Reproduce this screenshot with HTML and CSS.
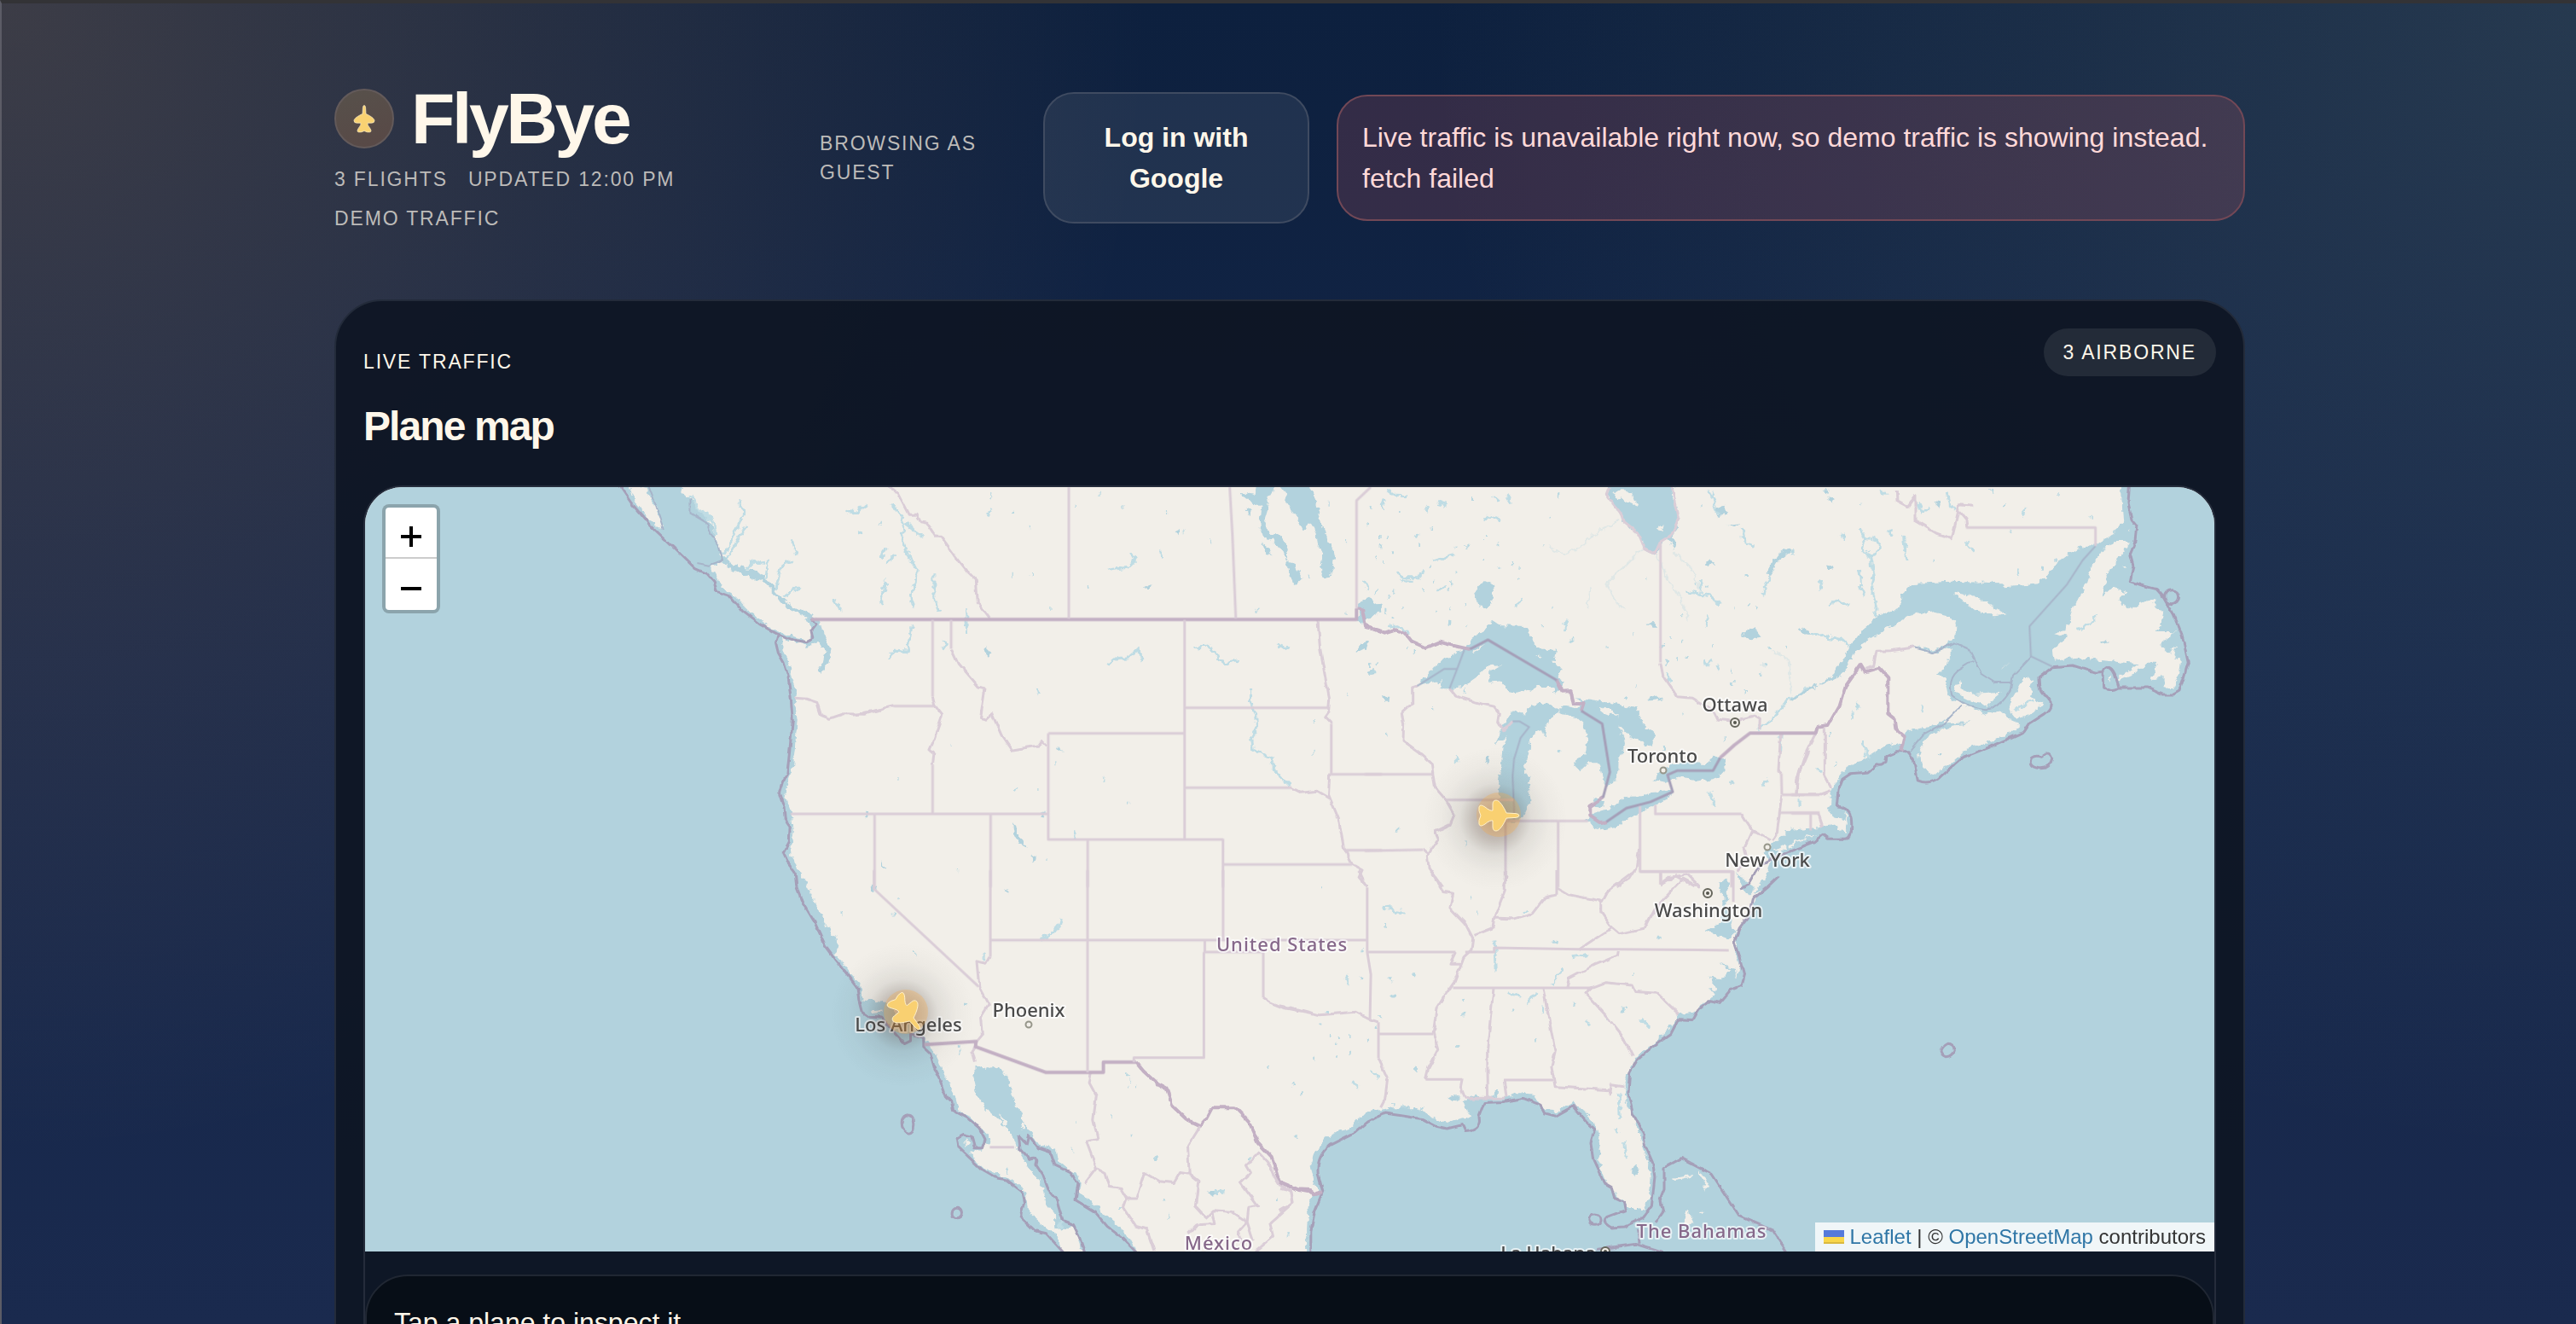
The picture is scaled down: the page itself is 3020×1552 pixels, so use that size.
FILE: index.html
```html
<!DOCTYPE html>
<html lang="en">
<head>
<meta charset="utf-8">
<title>FlyBye</title>
<link rel="stylesheet" href="styles.css">
</head>
<body>
<div class="app">
  <header class="topbar">
    <div class="brand">
      <div class="brand-title">
        <span class="logo">
          <svg viewBox="-24 -26 48 52" aria-hidden="true"><path class="plane" d="M0-24q2 0 2.400 4L3-9C10-6 18-1 18 3q0 4-5 4L6 7q-1 3 4 9 4 6 0 7-4 1-10-2-6 3-10 2-4-1 0-7 5-6 4-9L-13 7q-5 0-5-4C-18-1-10-6-3-9L-2.400-20Q-2-24 0-24z"/></svg>
        </span>
        <h1>FlyBye</h1>
      </div>
      <div class="meta">
        <span>3 FLIGHTS</span>
        <span>UPDATED 12:00 PM</span>
        <span>DEMO TRAFFIC</span>
      </div>
    </div>
    <p class="guest">BROWSING AS GUEST</p>
    <button class="login" type="button">Log in with Google</button>
    <p class="alert" role="alert">Live traffic is unavailable right now, so demo traffic is showing instead. fetch failed</p>
  </header>

  <main class="panel">
    <div class="panel-head">
      <div>
        <p class="eyebrow">LIVE TRAFFIC</p>
        <h2>Plane map</h2>
      </div>
      <span class="chip">3 AIRBORNE</span>
    </div>

    <div class="map-card">
      <div class="map">
        <svg class="map-art" viewBox="428 571 2168 896" preserveAspectRatio="xMidYMid slice" role="img" aria-label="Map of North America">
          <defs>
            <filter id="rough" x="-5%" y="-5%" width="110%" height="110%">
              <feTurbulence type="fractalNoise" baseFrequency="0.12" numOctaves="3" seed="4" result="n"/>
              <feDisplacementMap in="SourceGraphic" in2="n" scale="9" xChannelSelector="R" yChannelSelector="G"/>
            </filter>
            <filter id="wiggle" x="-5%" y="-5%" width="110%" height="110%">
              <feTurbulence type="fractalNoise" baseFrequency="0.08" numOctaves="2" seed="9" result="n"/>
              <feDisplacementMap in="SourceGraphic" in2="n" scale="5" xChannelSelector="R" yChannelSelector="G"/>
            </filter>
            <radialGradient id="halo">
              <stop offset="0" stop-color="#4a2c1c" stop-opacity=".42"/>
              <stop offset=".3" stop-color="#4a3830" stop-opacity=".27"/>
              <stop offset=".5" stop-color="#40403e" stop-opacity=".1"/>
              <stop offset=".75" stop-color="#404444" stop-opacity=".03"/>
              <stop offset="1" stop-color="#404444" stop-opacity="0"/>
            </radialGradient>
            <path id="plane" d="M0-24q2 0 2.400 4L3-9C10-6 18-1 18 3q0 4-5 4L6 7q-1 3 4 9 4 6 0 7-4 1-10-2-6 3-10 2-4-1 0-7 5-6 4-9L-13 7q-5 0-5-4C-18-1-10-6-3-9L-2.400-20Q-2-24 0-24z"/>
          </defs>

          <rect class="land" x="428" y="571" width="2168" height="896"/>

          <!-- coastlines and lakes -->
          <g filter="url(#rough)">
            <!-- north-west -->
            <g transform="translate(420 560) scale(.3954 .3333)">
              <path class="water" d="M-20 0H940L960 50 985 75 1005 105 1035 130 1050 175 1065 230 1080 270 1100 300 1150 322 1185 330 1225 370 1240 400 1270 440 1310 462 1345 480 1365 500 1380 540 1400 600 1395 650 1370 690 1362 670 1378 650 1385 610 1370 585 1330 590 1290 578 1258 560 1258 610 1275 650 1288 710 1298 740 1295 790 1302 850 1296 930 1290 1010 1275 1060 1268 1110 1275 1150 1288 1190 1292 1250 1282 1290 1280 1330 1300 1365 1312 1410 1315 1445H-20Z"/>
              <path class="land" d="M800 20L856 36 865 75 885 110 905 165 900 188 880 165 850 130 825 90ZM1045 310L1080 295 1110 325 1150 345 1200 365 1235 405 1262 450 1300 475 1330 495 1345 530 1345 572 1300 565 1240 540 1200 510 1150 460 1110 410 1075 385 1065 350Z"/>
              <path class="creek" d="M1085 270L1110 210 1130 160 1145 120 1130 85M1060 200L1050 150 1010 110 985 60M1090 290L1120 230 1150 170M1150 320L1175 290 1205 300M1210 350L1215 290M1240 390L1250 320 1285 290M1260 420L1310 380M1445 115L1480 120 1510 95M1480 120L1495 100M1285 220L1298 270M1410 425L1430 465M1550 390L1565 360M1480 195L1495 190"/>
            </g>
            <!-- northern plains -->
            <g transform="translate(1000 560) scale(.3954 .3333)">
              <path class="water" d="M1258 20H1355L1375 95 1390 165 1410 230 1428 262 1422 325 1408 352 1390 345 1388 300 1395 260 1375 235 1372 180 1350 160 1335 188 1320 150 1295 110 1280 80 1285 60ZM1195 20H1250L1245 50 1225 60 1232 110 1222 150 1235 205 1270 205 1290 240 1285 290 1310 305 1332 355 1312 375 1295 360 1290 310 1272 260 1245 215 1218 210 1205 160 1210 105 1180 80 1155 65V50L1190 60ZM1165 105L1180 110 1178 138 1168 130ZM1215 235L1230 245 1240 272 1225 270ZM470 1215L490 1245 513 1298 495 1292 475 1250ZM530 1328L540 1340 532 1358ZM1488 610L1500 590 1528 580 1520 600 1500 612ZM1525 680L1545 672 1540 695ZM955 190L968 182 965 202ZM862 378L880 380 875 392ZM395 595L408 610 402 630 392 615ZM612 945L625 965 608 955ZM1500 440L1530 425 1565 450 1560 470 1530 495 1515 515 1490 500 1505 475ZM85 1345L97 1370 85 1365ZM36 1175H44V1195H36ZM560 1172H568V1192H560Z"/>
              <path class="creek" d="M760 655L780 635 820 632 845 605 855 645M1010 600L1050 588 1075 610 1085 640 1110 652 1150 642M1180 740V790L1195 830 1198 880 1180 920 1185 955 1240 985 1250 1030 1300 1085M1260 592L1290 600M115 90L155 160 205 205M150 165L145 215 170 290 188 320 185 370 172 420 180 460M240 340L240 430 255 470M98 360L95 400 82 425 88 445M400 130L408 112M820 260L840 285 815 315 755 325M912 250L915 290M105 635L120 610 160 612 175 520M265 575L275 590 265 605M335 460L338 555M545 740L550 765M80 280L98 245M95 300L125 270M475 1105L488 1090M660 1240V1275"/>
              <path class="dot" d="M405 62h3M657 93h3M473 122h5M523 172h3M800 100h3M730 56h3M928 120h3M1060 226h3M528 347h3M472 341h3M690 384h4M585 462h3M1195 473h5M1365 858h3M1362 968h3M1465 762h3M744 1058h3M817 1142h3M600 1003h3M290 938h3M135 1058h3M547 1098h3M575 1347h3M311 1383h3M80 158h3M1348 350h5M1463 473h3M1410 92h3M1464 222h3M980 187h5"/>
            </g>
            <!-- great lakes -->
            <g transform="translate(1600 560) scale(.3333)">
              <path class="water" d="M860 10H1080L1090 90 1105 130 1100 170 1080 200 1090 230 1085 258 1070 215 1050 215 1020 268 985 250 965 200 910 155 900 125 850 60ZM185 732L270 640 350 605 375 570 430 530 450 500 480 520 570 522 590 580 615 605 675 605 668 645 692 675 680 710 705 720 690 752 660 750 665 735 610 735 540 758 505 750 480 715 430 720 440 680 478 658 440 660 395 700 345 735 300 742 262 742 270 715 220 725ZM458 940L475 890 520 820 555 830 585 800 640 793 685 815 655 850 640 870 632 920 620 885 600 895 580 940 575 980 562 1010 580 1080 580 1140 560 1185 540 1212 505 1210 480 1150 468 1080 480 1010 485 945 500 910 475 925ZM685 800L740 810 765 790 740 775 800 780 880 795 955 810 975 860 1020 905 1005 945 960 925 920 900 890 870 905 900 918 940 890 990 888 1060 850 1088 832 1050 825 1000 790 1000 755 1033 738 1015 745 990 775 975 785 920 770 870 740 840 685 825ZM775 1205L795 1185 840 1170 880 1155 920 1122 975 1120 1000 1108 1085 1100 1065 1130 1010 1160 950 1185 890 1225 840 1237 810 1230ZM812 1125L840 1135 835 1155 805 1160ZM1018 1063L1040 1030 1080 1005 1150 1003 1200 1005 1225 980 1265 985 1268 1035 1225 1060 1190 1065 1110 1055 1060 1070ZM390 400L420 362 450 375 455 420 430 458 400 450ZM1405 1320L1470 1260 1600 1235V1460H1370L1410 1400 1425 1350ZM1415 340L1430 290 1490 245 1500 262 1450 300 1425 345ZM1530 530L1555 525 1565 550 1545 558ZM1240 100L1265 95 1275 125 1245 140ZM1275 165L1320 160 1300 175ZM0 430L30 430 50 460 20 495 0 500ZM995 512L1015 510 1035 530 1010 530ZM1000 775L1030 765 1045 778 1010 784ZM1325 550L1370 525 1400 560 1350 565ZM1200 300L1215 285 1230 305 1210 312ZM60 770L85 770 82 788 65 788ZM425 980L440 975 437 1008 426 1000Z"/>
              <path class="land" d="M868 55Q900 30 940 55L958 98 915 82ZM1030 180L1055 165 1050 185ZM1440 1312L1490 1282 1600 1250V1265L1480 1310ZM815 800L870 820 890 842 850 828ZM600 628L620 625 615 632ZM380 610L425 585 420 592 385 618Z"/>
              <path class="creek" d="M80 45L100 60 150 62M255 85L290 95M420 155L435 130 480 150M240 290L310 270M110 330L140 350 190 350 205 330M130 360L170 365M0 360L10 400M70 80L60 100M500 60L515 85M450 65L470 80M215 120L225 100M180 215L190 195M1215 40L1230 90 1245 130M1330 180L1335 230 1370 240M1425 345L1400 415M1180 360V410M1130 400L1190 410 1220 420 1250 445M1380 885L1430 850 1480 790 1560 740M1465 905L1460 960M85 520L120 530 150 545M1060 690L1080 720M1190 640L1200 660 1220 640M1235 660L1245 680M1210 490L1205 530M700 540L708 500M530 460L550 425M255 400L280 375M325 975L325 1000M1215 1105L1230 1150M1400 1080L1420 1062"/>
              <path class="thin" d="M900 150L800 200 760 245 700 270 650 240M975 250L920 305 850 370 880 430 910 470M1030 270L1060 350 1110 420 1140 500M1090 265L1150 320 1180 400M790 380L785 460M1500 760L1490 640 1430 610"/>
              <path class="dot" d="M20 105h6M60 105h4M10 160h5M120 120h5M375 72h12M45 210h5M80 208h5M50 240h5M95 262h10M40 280h5M60 300h6M320 245h5M355 240h6M470 235h5M420 210h5M415 290h5M470 315h5M515 303h5M540 355h5M545 320h3M320 335h5M300 370h5M240 365h4M205 390h5M290 395h5M100 400h6M80 420h5M40 400h5M230 310h4M230 180h4M190 240h5M300 460h5M250 470h5M290 512h14M355 520h6M130 460h4M70 470h6M95 490h5M350 450h4M650 140h5M625 235h4M662 455h3M990 355h4M680 60h5M620 520h4M940 553h4M848 597h3M725 570h5M915 775h6M955 730h4M1095 638h6M1130 630h12M1115 575h5M1060 650h8M1290 720h8M1400 655h8M1390 690h6M1290 680h5M1220 590h4M1350 450h5M1380 460h5M1300 460h4M1340 345h10M1180 100h4M1130 400h5M1160 370h4M1200 380h5M1340 750h4M1118 830h3M1265 915h4M683 963h5M350 750h4M240 808h4M75 905h4M150 600h6M170 615h4M15 660h10M20 685h14M38 655h6M110 1235h8M355 1285h4M1285 1070h12M1530 1145h4M1045 950h14M1420 600h5M1480 600h5M1110 490h4M1075 560h5M1045 590h5"/>
            </g>
            <!-- atlantic canada and new england -->
            <g transform="translate(2100 560) scale(.3333)">
              <path class="water" d="M1160 10L1165 120 1168 160 1130 195 1075 235 1030 240 980 262 940 290 900 345 870 370 755 382 740 370 560 365 430 372 390 410 375 462 300 490 250 535 205 595 150 690 100 725 60 738 0 776V790L60 746 145 708 180 690 220 620 270 570 350 520 430 480 500 472 560 487 583 520 580 560 540 590 500 605 440 590 490 620 560 600V625L540 660 510 695 540 700 550 760 565 780 615 795 560 840 480 880 400 895 395 930 330 945 260 990 190 1020 160 1060 140 1100 135 1150 125 1155 150 1195 190 1200 180 1170 200 1200 190 1250 140 1215 100 1230 -20 1240V1470H1530V10Z"/>
              <path class="land" d="M535 865L600 800 640 810 690 832 740 822 770 850 805 865 770 895 690 930 620 950 570 1000 520 1030 490 1047 455 1010 450 960 480 910 540 880 635 862ZM770 790L800 740 830 700 850 715 840 770 880 790 870 815 830 840 790 845 770 820ZM570 740L600 705 595 740 640 765 735 758 700 785 695 805 640 785 600 765ZM565 403L640 415 700 445 755 485 710 490 650 465 590 425ZM1055 320L1095 250 1140 225 1182 225 1175 250 1140 290 1110 350 1090 420 1130 385 1180 400 1150 430 1190 460 1230 440 1280 430 1275 455 1315 475 1305 510 1280 540 1350 540 1300 590 1330 620 1355 590 1345 640 1372 630 1365 690 1345 740 1310 735V690L1270 715 1290 650 1250 650 1210 690 1150 715V700L1220 655 1120 645 1000 632 920 642 915 610 970 560 925 550 965 535 985 490 995 455 1030 400ZM-10 1292L60 1262 90 1255 40 1275 -10 1305ZM735 678L770 642 742 668ZM1115 700L1125 695 1120 720ZM1185 182L1190 178 1190 188ZM1170 312L1178 308 1175 318Z"/>
              <path class="water" d="M30 530L60 528 68 550 45 558ZM120 300L150 315 135 330ZM1085 585L1110 565 1115 580 1095 588ZM500 85L525 88 520 105ZM125 70L155 75 145 92ZM515 968L530 972 522 982ZM110 45L130 42 128 60Z"/>
              <path class="creek" d="M278 212A30 30 0 1 0 281 212M278 275L290 350 282 400 298 450 295 490M240 330L245 380 262 420M68 550L130 562 180 570 205 592M130 450L160 430 205 450M395 210L405 290M550 50L560 100 580 115M440 80L460 120 490 105M310 45L330 60M240 180L260 215M340 190L358 200M180 195L185 220M100 360L105 400M800 320L795 345M820 100L812 120 825 135M620 220L620 240 645 265M210 820L212 845M455 800L465 825M790 820L830 790 850 785M1000 535L1030 530 1075 480M30 1135V1150M90 1025L105 1035M250 930L275 990M230 800L238 815"/>
              <path class="dot" d="M230 800h5M135 905h4M150 1010h5M500 290h4M1052 140h4M940 60h4M770 190h5M880 320h8M925 290h5M700 45h6M750 100h6M180 200h6M0 265h5M240 95h4"/>
            </g>
            <!-- pacific and baja -->
            <g transform="translate(980 1020) scale(.3571 .3393)">
              <path class="water" d="M-1600 0H-120L-98 44-64 124-34 190 5 240 10 270-5 290 30 330 60 370 85 400 88 450 150 452 180 470 200 500 240 520 290 575 315 610 340 665 365 730 395 790 400 825 440 850 480 890 505 920 500 945 470 970 440 975 470 1020 520 1045 570 1065 610 1095 625 1130 630 1180 680 1225 730 1270 755 1350H-1600ZM455 670L490 690 515 675 565 710 575 770 600 830 625 890 660 940 725 965 730 1005 790 1055 805 1085 800 1115 850 1155 900 1205 950 1250 1000 1350H815L800 1290 780 1230 740 1245 720 1230V1190L690 1150 680 1090 640 1040 600 975 580 915 540 870 490 820 465 780 455 730ZM120 50H130V75H120ZM1220 1110L1245 1112 1275 1118 1230 1122ZM558 68L570 70 565 80Z"/>
              <path class="land" d="M535 840L565 880 560 888 540 860ZM610 865L622 880 612 898 604 885ZM110 485L150 482 150 492 115 495ZM425 925L440 945 430 955Z"/>
              <path class="creek" d="M740 165L735 190 715 215 670 240M485 290L485 310M735 1200L738 1240M1240 1115H1270"/>
              <path class="dot" d="M400 5h3M209 96h3M187 155h6M255 286h4M10 150h8M420 462h6M400 610h5M405 630h8M955 705h5M965 725h4M955 748h4M980 750h4M900 855h4M968 915h5M773 966h4M785 870h4M1045 993h10M1078 1136h4M1093 1196h4M1358 998h5M1445 1133h5M1480 1260h5M1418 684h5M1500 740h4M1528 770h6M1505 919h5M1185 1090h4M560 1040h5M930 1170h5"/>
            </g>
            <!-- gulf and south-east -->
            <g transform="translate(1500 1020) scale(.3571 .3393)">
              <path class="water" d="M1640 0L1600 50 1560 110 1530 175 1500 220 1495 260 1510 330 1500 370 1430 430 1360 490 1310 500 1280 550 1230 600 1180 635 1150 680 1130 750 1145 820 1180 900 1205 1000 1220 1060 1215 1120 1195 1170 1150 1170 1110 1125 1075 1080 1045 1000 1055 960 1040 880 1000 835 960 800 905 835 870 825 830 770 770 770 740 785 640 780 600 800 630 850 590 860 550 870 480 840 440 820 370 820 280 840 240 885 160 920 115 975 100 1020 110 1075 130 1105 95 1150 90 1240V1350H3120V0ZM1505 5L1510 40 1540 85 1562 60 1530 40ZM1470 30L1440 50 1455 100 1450 180 1395 210 1470 240 1500 220 1480 180 1465 120 1475 60ZM1495 340L1440 322 1480 345 1440 380 1410 370 1440 410 1410 415 1450 430 1500 390ZM550 785L580 775 595 790 570 802ZM1155 1035L1172 1018 1182 1040 1168 1053ZM705 760L715 755 718 785H705Z"/>
              <path class="land" d="M1328 1222L1342 1170 1360 1222ZM1290 1060L1355 1052 1350 1060 1300 1070ZM1370 1038L1395 1055 1408 1080 1392 1115 1398 1080ZM1378 1178H1392V1184H1378Z"/>
              <path class="creek" d="M705 240L710 290 712 355M930 335L895 395M750 420L790 440M815 458L845 425M1185 515L1215 545M300 690L325 720M245 735L258 750M215 365L225 400M1115 770L1118 860M1105 895L1115 915M340 130L410 145M1130 940L1138 1000M960 300L1015 290M800 150L815 145M865 500L868 470M1010 515L1018 535"/>
              <path class="dot" d="M135 57h5M627 95h4M345 188h5M647 146h3M895 247h20M1240 235h8M1158 360h4M360 375h12M435 360h12M265 375h8M270 275h6M600 448h8M365 438h14M600 500h6M765 485h6M965 465h8M1125 482h14M1070 512h8M843 585h5M580 610h6M445 686h6M150 492h12M130 535h8M165 575h5M195 575h6M230 575h4M310 545h8M285 585h6M110 650h5M185 645h8M230 630h5M45 740h4M70 770h6M50 919h5M25 1260h5M370 808h4M410 820h8M460 825h12M325 508h5M185 600h4"/>
            </g>
          </g>

          <!-- winding borders, coastal waters -->
          <g filter="url(#wiggle)">
            <g transform="translate(420 560) scale(.3954 .3333)">
              <path class="sea" d="M770 20L810 90 860 160 930 240 1000 320 1035 338 1055 365 1062 400 1100 415 1140 470 1190 515 1240 548 1290 570 1330 578 1350 565 1345 535 1358 515 1342 498M1245 550L1238 580 1245 615 1262 650 1275 700 1283 780 1288 850 1280 950 1272 1040 1258 1070 1248 1110 1262 1160 1265 1200 1280 1225 1278 1280 1260 1320 1272 1350 1295 1385 1300 1440"/>
              <path class="sea-thin" d="M862 33L880 90 905 180M985 70V125L1035 160 1045 200 1070 240 1080 290 1040 308 1005 300"/>
              <path class="state" d="M1295 775L1330 778 1360 790 1372 835 1398 847 1440 830 1500 832 1568 808"/>
            </g>
            <g transform="translate(1000 560) scale(.3954 .3333)">
              <path class="nation" d="M1493 460L1510 462 1520 525 1568 540"/>
              <path class="state" d="M105 33L130 50 165 130 190 130 200 155 220 160 245 205 260 205 300 270 340 330 365 360 370 440 405 495M236 770L242 800 265 835 240 920 225 960 240 975 236 1010M291 602L312 655 370 735 392 740 378 845 395 850 412 830 440 905 470 958 550 942 560 925 577 945M1378 500L1385 600 1400 700 1413 780 1410 820 1398 840 1418 865M1300 1090L1330 1108 1375 1102 1415 1130M1413 1043L1410 1115 1440 1200 1455 1300 1480 1360 1510 1380 1500 1405 1525 1440M0 835L60 820 120 803"/>
            </g>
            <g transform="translate(1600 560) scale(.3333)">
              <path class="nation" d="M0 520L70 548 110 535 145 550 165 575 215 597 262 578 320 592 370 603M675 712L695 752 725 750 735 795 770 795 762 820M838 1125L793 1155V1190L825 1212 850 1210"/>
              <path class="state" d="M298 742L320 768 410 795 455 805 475 830 470 860 488 890 520 857M185 732L167 738V797L130 830 137 860 135 925 190 965 235 1005 240 1043 248 1090 285 1133 315 1185 300 1220 248 1245 260 1270 220 1330 225 1370 275 1440M205 1308L228 1328M495 1400L487 1440M965 1305L955 1370 930 1410 885 1440M1325 1182L1345 1215 1362 1240 1425 1275M1362 1240L1335 1300 1345 1345 1310 1385M1040 650L1050 700 1100 770 1150 775 1225 820 1240 850 1290 855 1370 838 1390 850 1388 885M1463 900L1455 1030 1465 1040M1467 1115L1450 1250 1435 1275M1560 960L1530 1030 1518 1115M1040 1430L1075 1405 1135 1395 1180 1440M860 33L850 60 900 125 910 155 965 200 985 250 1020 268 1040 225 1080 200 1105 140 1080 33"/>
            </g>
            <g transform="translate(2100 560) scale(.3333)">
              <path class="sea" d="M1190 15L1185 90 1198 150 1215 170 1208 230 1192 270 1203 310 1192 365 1230 378 1285 392 1310 420 1345 480 1370 540 1383 590 1396 650 1380 705 1365 750 1345 762H1305L1250 738H1150Q1125 755 1100 735L1098 680Q1115 650 1135 690L1150 738M1098 682L1070 685 990 660 920 665 870 705Q870 755 900 770 930 800 890 830L835 865 815 895 690 950 600 985 560 1020 515 1060Q480 1080 445 1065L430 990 412 965H370L335 980Q335 1020 300 1010L270 1035 210 1040 180 1060 165 1100 160 1155Q210 1160 212 1210 215 1270 190 1270H130L110 1255 80 1280 0 1312-110 1360-150 1430-180 1450M845 985Q860 975 878 982 905 955 917 985 915 1025 870 1022 830 1015 845 985ZM1313 419a24 24 0 1 0 48 0 24 24 0 1 0-48 0"/>
              <path class="sea-thin" d="M640 645L585 680Q550 710 565 765 620 810 685 817 730 815 770 750L780 695 843 628M775 720H715L668 690 625 602 575 580 500 615 430 597M415 965L465 905 530 870 600 800"/>
              <path class="state" d="M430 597L350 608 300 610 290 660 262 670M370 45L372 80 410 100 435 65V150L510 195 565 215 585 130 590 95 640 100M590 120L615 150 618 175M118 880V1050L140 1090M90 890L50 970 20 1060 18 1115H100L140 1100M95 1180L110 1225"/>
              <path class="nation" d="M88 898L95 875 130 870 170 800 190 735 245 657 260 682 310 668 340 700V830L365 850 370 885 398 910 385 965"/>
            </g>
            <g transform="translate(980 1020) scale(.3571 .3393)">
              <path class="sea" d="M-129 59L-110 110-70 180-35 260 0 310 45 370 70 405 75 450 85 490 110 508 150 510 190 560 225 600 245 590V565L285 580V610L310 635 325 690 345 730 362 780 380 800 385 830 430 855 470 890 490 930 480 960H455L445 920 420 912 395 925 400 955 440 995 480 1035 530 1065 560 1070 610 1110 618 1150 605 1200 650 1245 690 1255 750 1325M600 920L605 965 635 1000Q665 990 655 1015L680 1055 700 1110 725 1140 745 1210 780 1225 800 1270 818 1325M600 920L625 945 632 915 665 960 705 975 720 1020 770 1045 795 1080 787 1140 850 1180 890 1230 940 1270 990 1325M236 848Q258 850 257 880 255 910 236 908 212 900 217 865 222 850 236 848M381 1185a16 17 0 1 0 32 0 16 17 0 1 0-32 0"/>
              <path class="nation" d="M985 663L1010 695 1055 738 1085 755 1105 815 1150 860 1195 882 1215 860 1235 820 1310 820 1355 870 1385 940 1430 990 1455 1075 1520 1105 1568 1115"/>
              <path class="state" d="M507 300L495 322 462 315 470 402 502 465 475 510 480 570 460 595M460 600L445 625 455 665M1403 440L1430 458 1470 475 1568 495M838 700L832 735 855 780 845 860 860 930 822 938 855 1030 815 1085M860 1030L885 1045 900 1095 935 1100 955 1135 985 1135 1012 1045 1060 1075 1110 1080 1130 1045 1160 1050M1195 882L1155 950 1160 1050 1190 1075 1180 1160 1215 1200 1240 1175 1300 1180 1350 1215 1355 1165 1385 1160 1328 1080 1362 1045 1348 1020 1390 975 1420 1010 1435 1050 1455 1085 1495 1110 1500 1150 1425 1220 1435 1265 1375 1317M955 1135L945 1165 985 1230 1020 1240 1045 1317M1155 1255L1185 1225 1243 1222 1235 1185M1350 1215L1320 1250 1330 1290M1350 1215L1370 1280"/>
            </g>
            <g transform="translate(1500 1020) scale(.3571 .3393)">
              <path class="sea" d="M1640 20L1600 60 1555 100 1545 150 1510 200 1493 250 1515 320 1525 360 1515 400 1480 415 1445 458 1415 450 1375 480 1355 517 1310 515 1285 565 1225 610 1175 655 1150 700 1145 770 1160 840 1195 910 1200 950 1225 1010 1232 1060 1222 1160 1195 1200 1130 1232 1090 1235Q1055 1215 1075 1198L1135 1175 1130 1145 1100 1130 1090 1095 1065 1080 1030 1000 1022 940 1035 895 1010 870 965 815 905 850 870 840 855 810 800 788 735 800 672 803 655 850Q665 900 610 903L600 880 550 893 515 885 470 860 400 848 345 840 290 870 250 905 165 950Q120 990 127 1050L142 1110 115 1180 103 1250V1325M1235 1217L1260 1180 1250 1135 1263 1100V1028L1320 995 1420 1050 1510 1195 1620 1245 1670 1325M1175 1240L1182 1290M1040 1310L1170 1292 1270 1325M1016 1209a20 18 0 1 0 40 0 20 18 0 1 0-40 0M2170 623q4-14 22-24 24 0 24 24-8 20-28 22-16-6-18-22"/>
              <path class="nation" d="M0 1078L60 1103 100 1105 115 1118 140 1112"/>
              <path class="state" d="M260 0L288 60M578 283L560 322H600M325 650L355 720 345 800 335 820M0 468L60 480 130 500 250 490 297 515 325 525M495 0L540 75 570 80 560 130 610 185 635 235 630 275 605 300 575 385 545 430 515 480 505 560 520 620 490 680 480 723M600 723L595 750 610 788H740M740 0V70L705 165 700 200 640 225M705 165L770 168 830 150 870 95 910 85M910 60L950 85 1050 105 1060 110 1080 70 1168 0M1055 110V145L1090 198 1115 220 1200 200 1235 130 1325 30 1380 60M1252 50L1300 20 1360 55M985 273L1090 200M1113 277L1110 295 1040 325 950 375 943 407M1022 407L1005 425 1070 500 1130 580 1160 642M1022 407L1070 388 1160 398 1170 420 1240 425 1310 497M703 407L682 620 685 788M865 407L905 625 893 680 905 748 1080 760 1085 775 1090 742 1130 748M745 785L737 725M0 1098L38 1105 45 1150 0 1178"/>
            </g>
          </g>

          <!-- surveyed straight borders -->
          <g>
            <g transform="translate(1000 560) scale(.3954 .3333)">
              <path class="nation" d="M-125 498H1493V460"/>
              <path class="state" d="M640 33V495M1117 33L1125 200 1135 495M1493 460V80L1535 33M236 500V770M236 1010V1182M291 500V602M983 500V1270M579 899H983M579 899V1272H1097V1440M-185 1182H579M64 1182V1440M408 1182V1440M696 1272V1440M983 809H1413M1418 865V1043H1568M983 1090H1300M1097 1360H1480M1460 1310H1568M120 803H240"/>
            </g>
            <g transform="translate(1600 560) scale(.3333)">
              <path class="sea" d="M370 603L433 570 675 712M762 820L835 865 862 1035 838 1125M850 1210L920 1162 1005 1140 1083 1105 1065 1045 1100 1030H1225L1250 985"/>
              <path class="nation" d="M1250 985L1300 940 1355 898H1588"/>
              <path class="sea-thin" d="M350 605L325 672 298 742M325 672H280L185 732M520 857H545L578 877 548 915 525 990 520 1050 525 1160V1205"/>
              <path class="state" d="M0 1043H240M285 1133H523M0 1312L205 1308M495 1205V1400M495 1207H785M680 1207V1440M968 1155V1385H1290V1440M1022 1150V1182H1325M1040 225V650M1467 1115H1600M1455 1178H1600M1040 1385V1430M1465 1040L1467 1115"/>
            </g>
            <g transform="translate(2100 560) scale(.3333)">
              <path class="sea-thin" d="M1070 240L1025 290 970 375 838 522 843 628 918 664"/>
              <path class="state" d="M615 175H1070V240M0 1180H95M68 1182V1240M0 1115H20"/>
            </g>
            <g transform="translate(980 1020) scale(.3571 .3393)">
              <path class="nation" d="M290 603L460 592 458 610 690 699H878V663H985"/>
              <path class="state" d="M125 0V65L468 402M507 0V300M507 242H1280M826 0V699M1271 0V242M1211 242V283M1208 283V648H978V663M1211 283H1403V440M505 957H585"/>
            </g>
            <g transform="translate(1500 1020) scale(.3571 .3393)">
              <path class="state" d="M288 60V283H578M-60 242H288M288 283L300 360 297 515M325 525V650M325 566H505M480 723H600M910 0V85M1185 5H1490V110M1252 10V50M610 283H705V268L985 273H1113L1475 277M570 407H1022M737 725H900"/>
            </g>
          </g>

          <g class="towns">
            <circle cx="2034" cy="847" r="5"/><circle class="core" cx="2034" cy="847" r="2"/>
            <circle cx="2002" cy="1047" r="5"/><circle class="core" cx="2002" cy="1047" r="2"/>
            <circle cx="1882" cy="1467" r="5"/><circle class="core" cx="1882" cy="1467" r="2"/>
            <circle class="small" cx="1950" cy="903" r="3.500"/>
            <circle class="small" cx="2072" cy="993" r="3.500"/>
            <circle class="small" cx="1206" cy="1201" r="3.500"/>
          </g>
          <g class="labels">
            <text x="2034" y="834">Ottawa</text>
            <text x="1949" y="894">Toronto</text>
            <text x="2072" y="1016">New York</text>
            <text x="2003" y="1075">Washington</text>
            <text x="1206" y="1192">Phoenix</text>
            <text x="1065" y="1209">Los Angeles</text>
            <text x="1815" y="1477">La Habana</text>
            <text class="country" x="1503" y="1115">United States</text>
            <text class="country" x="1429" y="1465">México</text>
            <text class="country" x="1995" y="1451">The Bahamas</text>
          </g>

          <g class="aircraft">
            <g transform="translate(1755 956)">
              <circle cx="-2" cy="4" r="84" fill="url(#halo)"/>
              <circle class="ring" cx="2" cy="-1" r="26"/>
              <use href="#plane" transform="translate(2 0) rotate(90)"/>
            </g>
            <g transform="translate(1060 1186)">
              <circle cx="-2" cy="4" r="84" fill="url(#halo)"/>
              <circle class="ring" cx="2" cy="0" r="26"/>
              <use href="#plane" transform="translate(3 2) rotate(141)"/>
            </g>
          </g>
        </svg>

        <div class="zoom">
          <button type="button" aria-label="Zoom in"><svg viewBox="0 0 24 24"><path d="M12 0v24M0 12h24"/></svg></button>
          <button type="button" aria-label="Zoom out"><svg viewBox="0 0 24 24"><path d="M0 12h24"/></svg></button>
        </div>

        <div class="credit">
          <svg class="flag" viewBox="0 0 24 16" aria-hidden="true"><path fill="#557adb" d="M0 0h24v8H0z"/><path fill="#f8d64a" d="M0 8h24v6H0z"/><path fill="#dab940" d="M0 14h24v2H0z"/></svg>
          <a href="#leaflet">Leaflet</a> | © <a href="#osm">OpenStreetMap</a> contributors
        </div>
      </div>

      <section class="detail">
        <p>Tap a plane to inspect it.</p>
      </section>
    </div>
  </main>
</div>
</body>
</html>
```
FILE: styles.css
```css
* { box-sizing: border-box; }

body {
  margin: 0;
  font-family: "Liberation Sans", Arial, sans-serif;
  color: #fff7ea;
  background: #14264a;
}

h1, h2, p { margin: 0; }

.app {
  height: 100vh;
  overflow: hidden;
  padding-left: 2px;
  border-top: 4px solid #333336;
  border-left: 2px solid #5c5c66;
  background:
    radial-gradient(circle at top left, rgba(250, 175, 105, 0.2), transparent 1350px),
    radial-gradient(circle at top right, rgba(170, 190, 170, 0.16), transparent 1350px),
    linear-gradient(180deg, #0d203e 0%, #142649 50%, #1a2a4e 100%);
}

.topbar,
.panel {
  width: calc(100% - 64px);
  max-width: 2240px;
  margin: 0 auto;
}

.topbar {
  display: flex;
  align-items: center;
  gap: 32px;
  padding: 93px 0 78px;
}

.brand {
  flex: 1;
  display: flex;
  flex-direction: column;
  gap: 12px;
}

.brand-title {
  display: flex;
  align-items: center;
  gap: 20px;
}

.logo {
  display: grid;
  place-items: center;
  width: 70px;
  height: 70px;
  border: 2px solid #635a5a;
  border-radius: 50%;
  background: linear-gradient(160deg, #57514b, #584846);
}

.logo svg { width: 32px; height: 35px; }

.plane { fill: #f9d272; stroke: #fff3d0; }

h1 {
  font-size: 84px;
  line-height: 84px;
  letter-spacing: -0.04em;
}

.meta {
  display: flex;
  flex-wrap: wrap;
  gap: 12px 24px;
}

.meta,
.guest,
.eyebrow,
.chip {
  font-size: 23px;
  line-height: 34px;
  letter-spacing: 0.08em;
}

.meta, .guest { color: #bdbbb9; }

.guest { flex: 0 0 230px; }

.login,
.alert {
  font-size: 32px;
  line-height: 48px;
  border-radius: 36px;
}

.login {
  flex: 0 0 312px;
  padding: 27px 36px;
  border: 2px solid #3f4b61;
  background: rgba(255, 255, 255, 0.08);
  color: #fff7ea;
  font-family: inherit;
  font-weight: 700;
}

.alert {
  flex: 0 0 1065px;
  padding: 24px 28px;
  border: 2px solid #724856;
  background: rgba(240, 100, 105, 0.17);
  color: #ffd9d9;
}

.panel {
  padding: 32px;
  border: 2px solid #232b3a;
  border-radius: 56px;
  background: rgba(14, 21, 35, 0.93);
}

.panel-head {
  display: flex;
  justify-content: space-between;
  align-items: flex-start;
  padding-bottom: 40px;
}

.eyebrow { padding: 22px 0 30px; }

h2 {
  font-size: 48px;
  line-height: 58px;
  letter-spacing: -0.04em;
}

.chip {
  padding: 11px 23px;
  border-radius: 30px;
  background: #232b38;
}

.map-card {
  border: 2px solid #252c3b;
  border-radius: 46px;
  overflow: hidden;
}

.map {
  position: relative;
  aspect-ratio: 2168 / 896;
  overflow: hidden;
}

.map-art {
  display: block;
  width: 100%;
  height: 100%;
}

.land { fill: #f2efe9; }
.water { fill: #b2d2dd; }

.map-art path { vector-effect: non-scaling-stroke; stroke-linejoin: round; }
.creek, .thin, .dot, .sea, .sea-thin, .nation, .state { fill: none; }
.creek { stroke: #bfdce4; stroke-width: 3; }
.thin { stroke: #dfe7e6; stroke-width: 2; }
.dot { stroke: #b9d8e1; stroke-width: 4; }
.sea { stroke: #a59fb8; stroke-width: 3; }
.sea-thin { stroke: #a7b4c9; stroke-width: 2; }
.nation { stroke: #c3b0c4; stroke-width: 4; }
.state { stroke: #dacdd7; stroke-width: 3; }

.towns circle { fill: #f2efe9; stroke: #66665c; stroke-width: 2; }
.towns .core { fill: #55554c; stroke: none; }
.towns .small { stroke: #96968a; }

.labels {
  font: 500 22px "Noto Sans", sans-serif;
  text-anchor: middle;
  fill: #4a4a4a;
  stroke: rgba(255, 255, 255, 0.7);
  stroke-width: 4px;
  stroke-linejoin: round;
  paint-order: stroke;
}

.labels .country { fill: #86688a; letter-spacing: 1px; }

.ring { fill: rgba(245, 170, 70, 0.3); }

.aircraft use { fill: #f9d071; stroke: #fff0c8; stroke-width: 1; }

.zoom {
  position: absolute;
  top: 20px;
  left: 20px;
  width: 68px;
  border: 4px solid rgba(0, 0, 0, 0.22);
  border-radius: 8px;
  background: #fff;
  background-clip: padding-box;
}

.zoom button {
  display: grid;
  place-items: center;
  width: 60px;
  height: 60px;
  padding: 10px 0 0;
  border: 0;
  background: none;
}

.zoom button:first-child { border-bottom: 2px solid #ccc; }

.zoom svg { width: 24px; height: 24px; fill: none; stroke: #000; stroke-width: 4; }

.credit {
  position: absolute;
  right: 0;
  bottom: 0;
  padding: 0 10px;
  font-size: 24px;
  line-height: 34px;
  color: #333;
  background: rgba(255, 255, 255, 0.8);
}

.credit a { color: #2f76a6; text-decoration: none; }

.flag { width: 24px; height: 16px; }

.detail {
  margin-top: 27px;
  padding: 30px 32px;
  border: 2px solid #202733;
  border-radius: 50px;
  background: #070e17;
  font-size: 32px;
  line-height: 48px;
}
```
